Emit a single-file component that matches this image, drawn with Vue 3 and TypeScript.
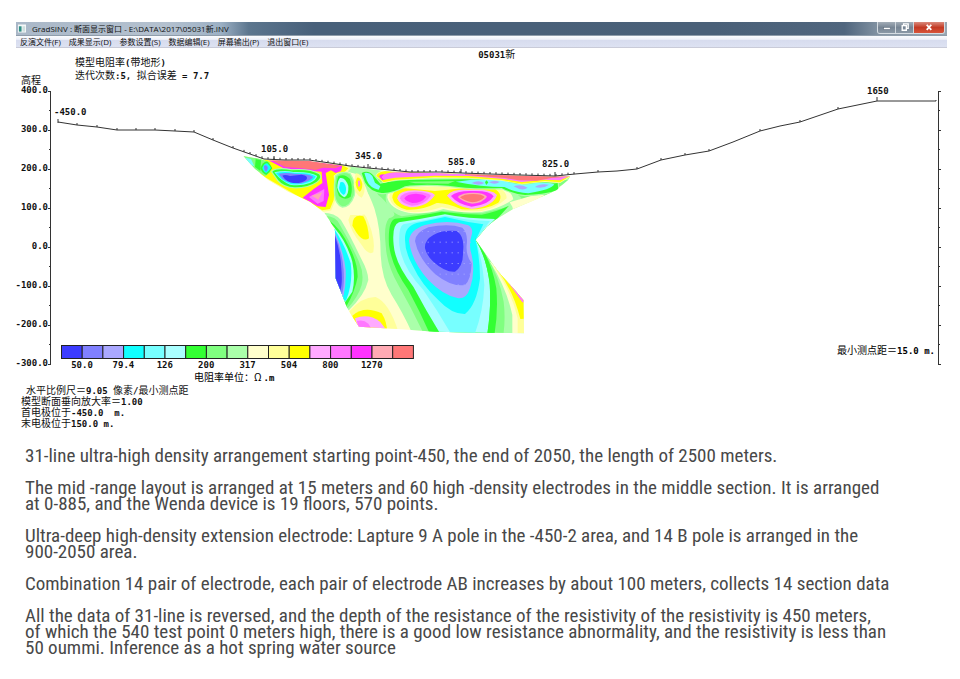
<script setup lang="ts">
interface Tick { value: string; y: number }
interface Mark { text: string; x: number; y: number }
interface Contour { level: number; d: string; halo?: number }
interface Segment { text: string; latin?: boolean }

const menus: string[] = ['反演文件(F)', '成果显示(D)', '参数设置(S)', '数据编辑(E)', '屏幕输出(P)', '退出窗口(E)']

const palette: string[] = [
  '#3c3cff', '#8080ff', '#aaa8ff', '#11ffff', '#77ffff', '#aaffff', '#33ff33', '#80ff80', '#aaffaa',
  '#ffffcc', '#ffff99', '#ffff00', '#ffaaff', '#ff77ff', '#ff33ff', '#ffaab4', '#ff7777',
]

const ticks: Tick[] = [400, 300, 200, 100, 0, -100, -200, -300].map((v, i) => ({
  value: v.toFixed(1),
  y: 91 + i * 39,
}))
const minorTicks: number[] = [0, 1, 2, 3, 4, 5, 6].map((i) => 110 + i * 39)

const marks: Mark[] = [
  { text: '-450.0', x: 54, y: 115 },
  { text: '105.0', x: 261, y: 152 },
  { text: '345.0', x: 355, y: 159 },
  { text: '585.0', x: 448, y: 165 },
  { text: '825.0', x: 542, y: 167 },
  { text: '1650', x: 867, y: 94 },
]

const scaleLabels: Mark[] = ['50.0', '79.4', '126', '200', '317', '504', '800', '1270'].map((text, i) => ({
  text,
  x: 82 + i * 41.4,
  y: 368,
}))

const terrain: [number, number][] = [
  [58, 122], [77, 125], [97, 127], [117, 130], [136, 130], [155, 130], [175, 131], [194, 132], [213, 140],
  [233, 148], [250, 154], [264, 159], [285, 160], [309, 160], [330, 163], [350, 166], [368, 168], [390, 170],
  [410, 172], [440, 172], [462, 173], [490, 174], [520, 175], [555, 176], [575, 174], [598, 172], [617, 171],
  [637, 169], [661, 160], [685, 155], [709, 151], [733, 142], [760, 131], [780, 126], [800, 122], [838, 109],
  [877, 101], [936, 101],
]
const terrainLine: string = terrain.map((p) => p.join(',')).join(' ')

function heightAt(x: number): number {
  for (let i = 1; i < terrain.length; i++) {
    const [x0, y0] = terrain[i - 1]
    const [x1, y1] = terrain[i]
    if (x <= x1) return y0 + ((y1 - y0) * (x - x0)) / (x1 - x0)
  }
  return 101
}
const electrodes: number[] = Array.from({ length: 56 }, (_, i) => 244 + i * 6)
const farPoints: number[] = [77, 97, 117, 136, 155, 175, 194, 213, 233, 598, 637, 661, 685, 709, 760, 800, 838]

// Contours are traced on a grid three times finer than the plot.
const contours: Contour[] = [
  // column under the left anomaly
  { level: 8, d: 'M262 203 Q300 203 318 225 Q345 270 378 340 Q400 380 400 405 Q390 450 340 497 L300 480 V230Z' },
  { level: 7, d: 'M268 212 Q305 213 315 240 Q345 290 372 350 Q388 385 380 420 Q370 455 338 490 L300 480 V250Z' },
  { level: 6, d: 'M280 224 Q320 252 345 310 Q368 355 368 395 Q360 440 335 482 L300 480 V250Z' },
  { level: 5, d: 'M298 248 Q335 290 352 350 Q362 400 352 440 L330 472 L295 460Z' },
  { level: 3, d: 'M298 252 Q330 300 347 355 Q355 410 333 467 L295 460Z' },
  { level: 2, d: 'M298 258 Q326 315 332 375 Q334 420 325 455 L295 440Z' },
  { level: 1, d: 'M298 262 Q322 320 326 375 Q329 420 321 448 L295 440Z' },
  { level: 0, d: 'M298 266 Q317 320 319 370 Q323 415 316 436 L295 420Z' },

  // centre column
  { level: 10, d: 'M348 205 Q388 188 400 230 Q422 285 415 322 Q400 332 380 300 Q348 260 340 225Z' },
  { level: 11, d: 'M352 242 Q352 206 385 214 Q400 240 402 280 Q385 292 365 264Z' },
  { level: 10, d: 'M342 500 Q380 455 422 456 Q462 472 490 560 H350Z' },
  { level: 11, d: 'M352 512 Q388 480 440 505 Q456 530 456 560 H365Z' },
  { level: 12, d: 'M360 520 Q400 504 435 530 L452 552 H370Z' },
  { level: 13, d: 'M366 528 Q385 522 400 536 L410 552 H370Z' },

  // body of the right half
  { level: 8, d: 'M335 62 L1010 90 L1000 110 L930 150 L830 195 L770 235 L722 285 L770 360 L760 570 L534 570 Q505 505 470 450 Q440 400 437 330 Q437 250 418 190 Q404 150 385 120 Q360 85 335 78Z' },
  { level: 9, d: 'M330 90 Q345 78 365 88 Q388 105 400 150 L420 200 L380 210 L340 210 L355 160Z' },
  { level: 7, d: 'M400 105 Q440 100 480 100 L1000 105 L940 150 L830 175 L790 200 L722 285 L760 570 L568 570 Q530 490 490 420 Q455 360 452 300 Q445 240 462 220 Q490 212 470 195 Q450 165 430 150Z' },
  { level: 8, d: 'M455 140 Q540 112 640 120 L790 112 Q840 140 860 160 L820 185 L740 205 L620 198 L500 214 Q440 190 455 140Z' },

  // high belt
  { level: 9, d: 'M457 158 Q455 128 505 123 L770 118 Q828 128 835 163 Q790 192 740 201 Q680 206 625 192 Q570 210 520 203 Q467 193 457 158Z' },
  { level: 10, d: 'M463 158 Q463 130 508 126 L770 122 Q816 132 815 160 Q780 192 740 198 Q680 202 620 186 Q565 206 518 200 Q472 190 463 158Z' },
  { level: 11, d: 'M472 158 Q472 132 512 130 L600 138 L640 134 Q700 127 775 128 Q808 148 790 173 Q750 197 680 193 Q630 172 605 174 Q560 197 515 194 Q477 184 472 158Z' },
  { level: 12, d: 'M487 160 Q490 136 540 136 Q588 138 600 150 Q575 187 525 187 Q492 180 487 160Z' },
  { level: 13, d: 'M495 160 Q500 140 540 140 Q580 141 588 152 Q568 181 530 182 Q500 176 495 160Z' },
  { level: 14, d: 'M508 160 Q515 147 543 146 Q568 148 574 155 Q560 174 532 174 Q512 170 508 160Z' },
  { level: 12, d: 'M636 152 Q650 132 700 134 Q770 130 786 150 Q775 185 710 192 Q662 185 636 152Z' },
  { level: 14, d: 'M648 153 Q665 137 710 138 Q765 136 776 154 Q760 181 710 185 Q668 178 648 153Z' },
  { level: 15, d: 'M668 156 Q680 143 715 143 Q748 143 756 155 Q745 173 712 176 Q684 172 668 156Z' },
  { level: 16, d: 'M675 157 Q686 147 715 147 Q742 147 749 156 Q738 169 712 172 Q688 168 675 157Z' },
  { level: 9, d: 'M824 172 L905 148 L930 150 L835 198 L832 185Z' },

  // central low
  { level: 6, d: 'M462 300 Q458 228 480 221 Q560 212 620 200 Q680 208 740 209 Q780 202 822 182 L770 240 L722 285 L765 350 L780 570 H586 Q555 500 520 435 Q470 365 462 300Z' },
  { level: 5, d: 'M476 300 Q470 240 492 232 Q560 222 630 208 Q700 222 780 222 L722 285 Q755 340 765 420 Q768 500 756 570 H618 Q575 500 535 425 Q480 355 476 300Z' },
  { level: 4, d: 'M493 300 Q490 245 505 238 Q570 226 630 212 Q700 226 765 228 L722 285 Q742 340 748 420 Q745 500 718 570 H650 Q610 500 565 435 Q500 365 493 300Z' },
  { level: 3, d: 'M510 285 Q508 244 545 234 L630 216 L700 231 L745 238 L722 285 Q735 340 735 400 Q725 480 690 507 Q650 508 610 465 Q560 420 532 360 Q510 320 510 285Z' },
  { level: 2, d: 'M522 288 Q524 255 570 240 Q640 222 700 241 Q716 250 710 270 Q700 300 710 330 Q722 380 705 430 Q695 462 670 460 Q625 452 580 405 Q530 350 522 288Z' },
  { level: 1, d: 'M540 288 Q542 262 580 247 Q640 234 682 248 Q700 265 695 300 Q692 330 710 355 Q708 405 690 420 Q650 427 600 387 Q550 340 540 288Z' },
  { level: 0, d: 'M570 310 Q568 285 595 270 Q620 254 665 258 Q690 275 684 320 Q686 362 660 380 Q630 382 595 350 Q575 332 570 310Z' },

  // right flank
  { level: 7, d: 'M722 285 Q760 340 780 430 Q786 500 774 570 H880 V440 L780 340Z' },
  { level: 6, d: 'M722 280 Q770 345 784 430 Q790 500 778 570 H757 Q770 480 763 410 Q752 330 722 285Z' },
  { level: 8, d: 'M738 308 Q790 380 806 470 Q812 520 805 570 H880 V440 L780 340Z' },
  { level: 9, d: 'M765 350 Q815 430 832 510 L832 570 H880 V440 L800 360Z' },
  { level: 10, d: 'M775 362 Q830 440 848 520 V570 H880 V440 L800 360Z' },
  { level: 11, d: 'M788 376 Q836 440 856 522 L880 520 V440 L800 360Z' },
  { level: 13, d: 'M815 406 L862 472 L880 470 L840 410Z' },

  // shallow left
  { level: 11, halo: 10, d: 'M90 44 L320 60 L340 70 L330 80 L306 84 L296 92 L300 130 L296 165 L285 192 L262 196 L75 88Z' },
  { level: 7, d: 'M20 30 L70 40 L104 52 L106 82 L90 94 L50 66Z' },
  { level: 6, d: 'M62 42 L78 46 L76 78 L60 66Z' },
  { level: 4, d: 'M30 38 L48 42 L58 64 L44 58Z' },
  { level: 6, d: 'M76 70 Q84 48 98 50 Q108 60 112 70 Q104 82 94 90 Q80 84 76 70Z' },
  { level: 3, d: 'M82 68 Q88 54 97 55 Q104 62 108 69 Q100 80 94 84 Q84 80 82 68Z' },
  { level: 1, d: 'M87 62 Q95 58 99 68 L94 80 Q87 78 87 62Z' },
  { level: 14, d: 'M100 46 L220 48 L322 62 L318 78 L302 84 L288 76 L272 84 L276 110 L282 150 L272 186 L248 184 L203 158 L236 132 L262 114 L260 80 L200 76 L150 72Z' },
  { level: 13, d: 'M222 156 L268 132 L266 168 L248 176Z' },
  { level: 15, d: 'M230 152 L262 142 L250 164Z' },
  { level: 16, d: 'M110 46 L225 48 L316 64 L300 70 L264 68 L242 75 L200 70 L150 66Z' },
  { level: 6, halo: 7, d: 'M112 80 Q126 68 170 76 Q225 72 252 88 Q262 98 245 110 Q220 127 180 127 Q146 126 130 106Z' },
  { level: 4, d: 'M118 82 Q150 74 175 81 Q225 79 247 93 Q243 106 225 114 Q195 125 165 119 Q140 110 118 82Z' },
  { level: 3, d: 'M123 84 Q150 78 178 84 Q225 82 242 94 Q238 106 220 112 Q195 121 165 116 Q140 108 123 84Z' },
  { level: 1, d: 'M130 86 Q155 82 180 86 Q222 86 235 96 Q226 108 200 115 Q165 117 143 102Z' },
  { level: 0, d: 'M142 92 Q150 88 165 93 L200 89 Q222 92 214 104 Q200 116 175 114 Q155 112 142 92Z' },

  // isolated cells
  { level: 7, halo: 8, d: 'M304 94 Q322 78 344 88 Q362 115 356 150 Q344 184 322 184 Q304 176 301 150 Q298 120 304 94Z' },
  { level: 6, d: 'M310 94 Q328 84 345 102 Q355 130 347 155 Q330 168 312 153 Q298 124 310 94Z' },
  { level: 5, d: 'M315 99 Q331 96 340 123 Q342 150 328 157 Q312 148 307 128 Q307 108 315 99Z' },
  { level: 3, d: 'M316 112 Q328 106 333 128 Q334 146 326 150 Q314 144 312 128Z' },
  { level: 10, d: 'M362 85 Q378 84 388 112 Q392 145 380 158 Q360 150 356 120Z' },
  { level: 11, d: 'M366 98 Q376 94 382 116 Q382 134 374 140 Q362 130 362 112Z' },
  { level: 13, d: 'M369 108 L374 106 L376 122 L370 126Z' },
  { level: 6, halo: 7, d: 'M380 84 Q400 74 416 92 L436 116 Q480 104 560 104 L680 103 Q780 102 822 118 Q880 126 968 114 L970 136 Q920 150 870 150 Q830 145 800 129 Q700 132 640 122 Q560 116 510 124 Q470 146 440 144 Q405 140 390 112Z' },
  { level: 7, d: 'M520 110 L660 108 L640 116 L540 115Z' },
  { level: 4, d: 'M388 84 Q402 80 412 93 L420 113 L436 124 L431 134 Q405 130 395 106Z' },
  { level: 4, d: 'M662 110 Q730 100 800 104 Q830 118 870 120 Q920 108 958 118 Q950 134 880 145 Q840 142 808 126 Q740 126 662 110Z' },
  { level: 6, d: 'M754 106 L760 112 L754 120 L750 112Z' },
  { level: 2, d: 'M710 114 Q730 104 748 114 Q732 124 710 114Z' },
  { level: 2, d: 'M762 112 Q780 104 794 111 Q780 121 762 112Z' },
  { level: 2, d: 'M836 124 Q856 116 878 128 Q862 140 836 124Z' },
  { level: 2, d: 'M900 126 Q915 114 942 119 Q925 132 900 126Z' },

  // strip below the surface on the right
  { level: 11, halo: 4, d: 'M424 92 Q430 76 470 78 L1010 90 L975 112 L930 108 L860 116 L800 105 L700 98 L600 97 L480 104 L446 112Z' },
  { level: 14, d: 'M432 94 Q438 84 452 90 L452 102 L442 106Z' },
  { level: 13, d: 'M440 96 Q446 84 480 82 L1010 91 L975 106 L930 104 L860 111 L800 101 L700 93 L600 92 L480 98 L446 104Z' },
  { level: 16, d: 'M690 86 L1000 95 L950 99 L905 107 L850 106 L810 99 L690 90Z' },
]

const notes: Segment[][] = [
  [{ text: '水平比例尺＝' }, { text: '9.05 ', latin: true }, { text: '像素' }, { text: '/', latin: true }, { text: '最小测点距' }],
  [{ text: '模型断面垂向放大率＝' }, { text: '1.00', latin: true }],
  [{ text: '首电极位于' }, { text: '-450.0  m.', latin: true }],
  [{ text: '末电极位于' }, { text: '150.0 m.', latin: true }],
]

const paragraphs: string[][] = [
  ['31-line ultra-high density arrangement starting point-450, the end of 2050, the length of 2500 meters.'],
  [
    'The mid -range layout is arranged at 15 meters and 60 high -density electrodes in the middle section. It is arranged',
    'at 0-885, and the Wenda device is 19 floors, 570 points.',
  ],
  [
    'Ultra-deep high-density extension electrode: Lapture 9 A pole in the -450-2 area, and 14 B pole is arranged in the',
    '900-2050 area.',
  ],
  ['Combination 14 pair of electrode, each pair of electrode AB increases by about 100 meters, collects 14 section data'],
  [
    'All the data of 31-line is reversed, and the depth of the resistance of the resistivity of the resistivity is 450 meters,',
    'of which the 540 test point 0 meters high, there is a good low resistance abnormality, and the resistivity is less than',
    '50 oummi. Inference as a hot spring water source',
  ],
]
</script>

<template>
  <main class="page">
    <section class="window">
      <header class="titlebar">
        <svg class="app-icon" viewBox="0 0 9 9" aria-hidden="true">
          <rect width="9" height="9" fill="#f4f8f8" />
          <rect x="1" y="2" width="3" height="6" fill="#2f8f86" />
          <rect x="5" y="2" width="3" height="6" fill="#cfdede" />
        </svg>
        <h1 class="caption">GradSINV : 断面显示窗口 - E:\DATA\2017\05031新.INV</h1>
        <div class="controls">
          <button type="button" class="control" aria-label="Minimize">
            <svg viewBox="0 0 18 12"><rect x="6" y="6" width="7" height="2" fill="#fff" stroke="#5d6b79" stroke-width=".5" /></svg>
          </button>
          <button type="button" class="control" aria-label="Restore">
            <svg viewBox="0 0 18 12">
              <path d="M8 3.500V2h5v5h-1.500M6.500 4h4.500v5H6.500z" fill="none" stroke="#fff" stroke-width="1.500" />
            </svg>
          </button>
          <button type="button" class="control close" aria-label="Close">
            <svg viewBox="0 0 30 12"><path d="M12.500 3l5 5.500M17.500 3l-5 5.500" stroke="#fff" stroke-width="2" /></svg>
          </button>
        </div>
      </header>
      <nav class="menubar">
        <button v-for="menu in menus" :key="menu" type="button" class="menu">{{ menu }}</button>
      </nav>

      <div class="heading">
        <span class="axis-name">高程</span>
        <div class="model">
          <p>模型电阻率<b>(</b>带地形<b>)</b></p>
          <p>迭代次数<b>:5,  </b>拟合误差<b> = 7.7</b></p>
        </div>
        <p class="profile"><b>05031</b>新</p>
      </div>

      <svg class="plot" viewBox="16 86 934 298" role="img" aria-label="断面图">
        <defs>
          <clipPath id="section">
            <path
              d="M25 33 L100 46 L220 48 L300 58 L340 64 L400 72 L470 80 L600 84 L700 88 L800 91 L950 95 L1006 94 L1000 104 L965 135 L900 165 L835 192 L780 225 L755 245 L722 285
              L750 325 L790 380 L835 430 L865 465 L867 565 L750 563 L600 560 L500 553 L372 545 L350 512 L335 485 L318 440 L302 400 L300 258 L285 228 L268 203 L225 170 L160 140 L100 105 L60 72 Z"
            />
          </clipPath>
          <pattern id="dots" width="18" height="32" patternUnits="userSpaceOnUse" x="560" y="258">
            <rect width="3" height="3" fill="#aaaaff" />
          </pattern>
        </defs>

        <g transform="translate(235 145) scale(0.333333)">
          <g clip-path="url(#section)">
            <rect x="0" y="20" width="1035" height="565" :fill="palette[9]" />
            <path
              v-for="(contour, i) in contours"
              :key="i"
              :d="contour.d"
              :fill="palette[contour.level]"
              :stroke="contour.halo ? palette[contour.level === 11 ? 10 : 8] : 'none'"
              :stroke-width="contour.halo ?? 0"
              paint-order="stroke"
            />
            <path d="M560 252 H712 V425 H640 L560 350 Z" fill="url(#dots)" />
          </g>
        </g>

        <g class="ink">
          <polyline :points="terrainLine" />
          <path v-for="x in electrodes" :key="'e' + x" :d="`M${x} ${heightAt(x)}v-2`" />
          <path v-for="x in farPoints" :key="'f' + x" :d="`M${x - 1} ${heightAt(x) - 1}h2`" />
          <path d="M58 123v-4M274 160v-4M368 168v-4M461 173v-4M555 176v-4M877 101v-4M936 101v-1" />
          <path d="M50.500 91V365M938.500 91V365" />
          <path v-for="t in ticks" :key="'t' + t.y" :d="`M48 ${t.y}.5h3M938 ${t.y}.5h3`" />
          <path v-for="y in minorTicks" :key="'m' + y" :d="`M49 ${y}.5h2M938 ${y}.5h2`" />
        </g>

        <g class="figures">
          <text v-for="t in ticks" :key="t.value" x="48" :y="t.y + 2" text-anchor="end">{{ t.value }}</text>
          <text v-for="m in marks" :key="m.text" :x="m.x" :y="m.y">{{ m.text }}</text>
          <text v-for="s in scaleLabels" :key="s.text" :x="s.x" :y="s.y" text-anchor="middle">{{ s.text }}</text>
        </g>

        <g stroke="#222" stroke-width="1">
          <rect v-for="(color, i) in palette" :key="color" :x="61.5 + i * 20.7" y="345.5" width="20.7" height="13" :fill="color" />
        </g>

        <text class="label" x="194" y="381">电阻率单位：<tspan>Ω</tspan><tspan class="latin" dx="2">.m</tspan></text>
        <text class="label" x="935" y="354" text-anchor="end">最小测点距＝<tspan class="latin">15.0 m.</tspan></text>
      </svg>

      <ul class="notes">
        <li v-for="(note, i) in notes" :key="i">
          <template v-for="(part, j) in note" :key="j">
            <b v-if="part.latin">{{ part.text }}</b>
            <span v-else>{{ part.text }}</span>
          </template>
        </li>
      </ul>
    </section>

    <article class="report">
      <p v-for="(lines, i) in paragraphs" :key="i">
        <span v-for="line in lines" :key="line">{{ line }}</span>
      </p>
    </article>
  </main>
</template>

<style>
body {
  margin: 0;
  background: #fff;
}
</style>

<style scoped>
.page {
  padding: 22px 10px 16px 16px;
  color: #111;
  font-family: "Noto Sans", "Noto Sans CJK SC", sans-serif;
}
p,
h1,
ul {
  margin: 0;
  padding: 0;
}
button {
  padding: 0;
  border: 0;
  background: none;
  color: inherit;
  font: inherit;
}
.titlebar,
.menubar {
  display: flex;
  box-sizing: border-box;
  margin-right: 3px;
}
.titlebar {
  align-items: center;
  height: 14px;
  padding-left: 2px;
  border-bottom: 1px solid #8f9dab;
  background: linear-gradient(90deg, #aab8c8 0, #b4c1cf 16%, #9cb0c4 22%, #5c768e 25%, #48607a 32%, #4a6078 75%, #50667e 89%, #8797a6 93%, #98a6b2 100%);
}
.app-icon {
  width: 8px;
  height: 9px;
}
.caption {
  flex: 1;
  margin-left: 6px;
  font-family: "Open Sans", "Noto Sans CJK SC", sans-serif;
  font-size: 8px;
  font-weight: 400;
  line-height: 13px;
  white-space: nowrap;
}
.controls {
  display: flex;
  align-self: flex-start;
  margin-right: 2px;
  border: 1px solid #d5dce2;
  border-top: 0;
  border-radius: 0 0 3px 3px;
  overflow: hidden;
}
.control {
  width: 18px;
  height: 11px;
  border-right: 1px solid #cfd6dc;
  background: linear-gradient(#a3adb7, #778594 50%, #8a98a6);
}
.control svg {
  display: block;
  width: 100%;
  height: 100%;
}
.close {
  width: 30px;
  border-right: 0;
  background: linear-gradient(#d98a7c, #c33a24 50%, #d8543a);
}
.menubar {
  gap: 8px;
  height: 12px;
  padding-left: 4px;
  border-bottom: 1px solid #c9cbd8;
  background: linear-gradient(#fbfcfe 0, #eef1f9 30%, #d7dcee 40%, #dde2f2 100%);
}
.menu {
  font-family: "Open Sans", "Noto Sans CJK SC", sans-serif;
  font-size: 8px;
  line-height: 12px;
  white-space: nowrap;
}
.heading,
.notes {
  font-family: "Noto Sans CJK SC", sans-serif;
  font-size: 10px;
}
b {
  font-family: "DejaVu Sans Mono", monospace;
  font-size: 9px;
  font-weight: 700;
  white-space: pre;
}
.heading {
  display: grid;
  grid-template-columns: 54px 43.4% 1fr;
  height: 38px;
  padding-left: 5px;
  line-height: 12px;
}
.axis-name {
  align-self: end;
}
.model {
  padding-top: 8px;
}
.plot {
  display: block;
  width: 100%;
  height: auto;
}
.ink {
  fill: none;
  stroke: #333;
  stroke-width: 1;
}
.figures,
.latin {
  font: 700 9px "DejaVu Sans Mono", monospace;
}
.figures {
  fill: #111;
}
.label {
  font-family: "Noto Sans CJK SC", sans-serif;
  font-size: 10px;
}
.notes {
  padding-left: 5px;
  line-height: 11px;
  list-style: none;
}
.notes li {
  height: 11px;
}
.notes li:first-child {
  padding-left: 5px;
}
.report {
  display: grid;
  gap: 16px;
  margin-top: 20px;
  padding-left: 9px;
  color: #484848;
  font-family: "Roboto Condensed", Roboto, sans-serif;
  font-size: 19px;
  line-height: 16px;
}
.report span {
  display: block;
}
</style>
